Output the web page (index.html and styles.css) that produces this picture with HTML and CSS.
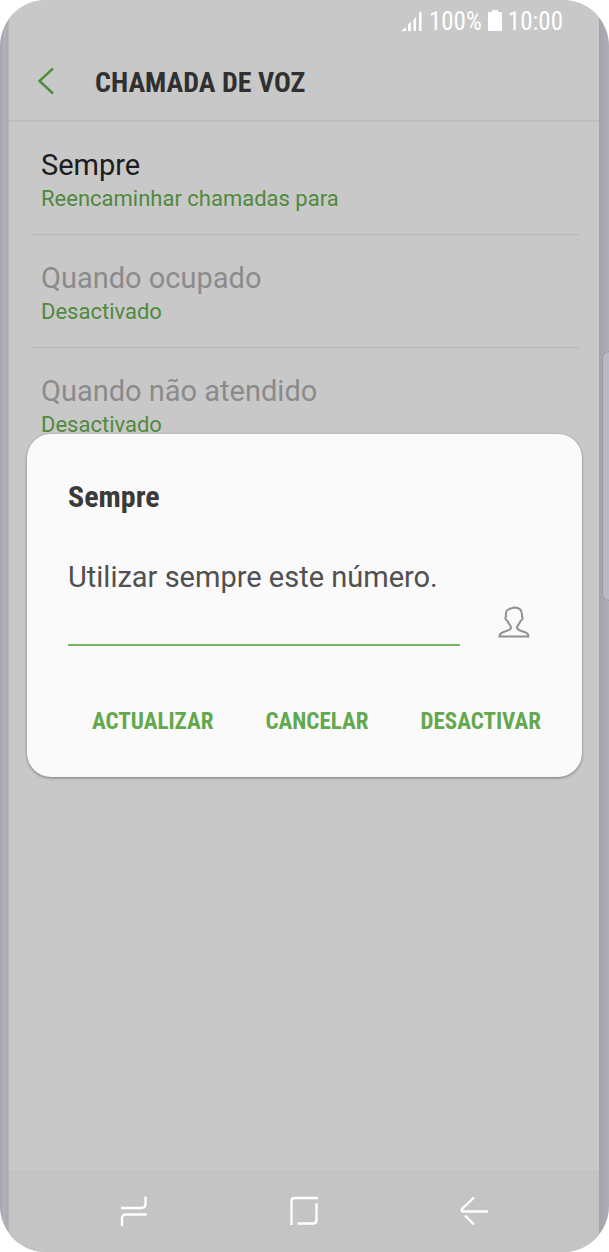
FILE: index.html
```html
<!DOCTYPE html>
<html lang="pt">
<head><meta charset="utf-8"/>
<meta name="viewport" content="width=device-width, initial-scale=1"/>
<title>Chamada de voz</title>
<link rel="stylesheet" href="styles.css">
</head>
<body>
<div class="phone">
<div class="sidekey"></div>
<div class="screen">
    <div class="statusbar">
        <svg class="signal" width="22" height="22" viewBox="0 0 22 22">
            <path d="M0 21L5 17V21ZM7 14.500L10 12V21H7ZM12.500 9.500L15 7V21H12.500ZM18 3L20.500 1V21H18Z" fill="currentColor"/>
        </svg>
        <span>100%</span>
        <svg class="battery" width="14" height="22" viewBox="0 0 14 22">
            <path d="M4 0H10V2H13Q14 2 14 3V20Q14 21 13 21H1Q0 21 0 20V3Q0 2 1 2H4Z" fill="currentColor"/>
        </svg>
        <span>10:00</span>
    </div>

    <header class="titlebar">
        <button class="back" aria-label="Voltar">
            <svg width="18" height="28" viewBox="0 0 18 28"><path d="M16 1.500L2.500 14L16 26.500" fill="none" stroke="currentColor" stroke-width="2.500"/></svg>
        </button>
        <h1>CHAMADA DE VOZ</h1>
    </header>

    <ul class="settings">
        <li><span class="name">Sempre</span><span class="value">Reencaminhar chamadas para</span></li>
        <li class="disabled"><span class="name">Quando ocupado</span><span class="value">Desactivado</span></li>
        <li class="disabled"><span class="name">Quando não atendido</span><span class="value">Desactivado</span></li>
    </ul>

    <nav class="navbar">
        <button aria-label="Recentes">
            <svg width="28" height="32" viewBox="0 0 28 32"><path d="M1 13H21Q25.500 13 25.500 9V1.500M26.500 19.500H6Q2 19.500 2 23.500V31"/></svg>
        </button>
        <button aria-label="Início">
            <svg width="28" height="32" viewBox="0 0 28 32"><path d="M1.500 30V6Q1.500 3 4.500 3H28M26.500 8.500V25Q26.500 28.500 23 28.500H7.500"/></svg>
        </button>
        <button aria-label="Retroceder">
            <svg width="28" height="32" viewBox="0 0 28 32"><path d="M14 2.500L2 14Q1 16.500 3 16.500H28M5 20.500L14 29.500"/></svg>
        </button>
    </nav>
</div>

<!-- dialog floats over the list -->
<form class="dialog" role="dialog" aria-labelledby="dialogTitle">
    <h2 id="dialogTitle">Sempre</h2>
    <label for="number">Utilizar sempre este número.</label>
    <div class="numberrow">
        <input id="number" type="tel">
        <button type="button" class="contact" aria-label="Contactos">
            <svg width="32" height="32" viewBox="0 0 32 32"><path d="M1.500 30.500C1.500 27.500 3 26.500 7 25.500C11 24.500 13 23.500 13 21.500C13 19 10.500 18.500 9.500 15C7 13.500 7 11.500 8 10.500C7 4 10 3 13 2.500L16 1.500C21.500 1.500 24.500 4 24 10.500C25 11.500 25 13.500 22.500 15C21.500 18.500 19 19 19 21.500C19 23.500 21 24.500 25 25.500C29 26.500 30.500 27.500 30.500 30.500Z" fill="none" stroke="currentColor" stroke-width="2"/></svg>
        </button>
    </div>
    <div class="actions">
        <button type="button">ACTUALIZAR</button>
        <button type="button">CANCELAR</button>
        <button type="button">DESACTIVAR</button>
    </div>
</form>
</div>
</body>
</html>
```
FILE: styles.css
```css
* { box-sizing: border-box; }

body {
    margin: 0px;
    background: #fff;
    font-family: Roboto, "Liberation Sans", sans-serif;
}

button {
    padding: 0;
    border: 0;
    background: none;
    cursor: pointer;
}

svg { display: block; }

.phone {
    position: relative;
    display: flex;
    min-height: 100vh;
    padding: 0 10px 0 9px;
    overflow: hidden;
    border-radius: 46px;
    background: linear-gradient(to right, #a5a6ad 0, #b3b4bb 5px, #a9aab0 7px, #b9b9bb 9px, #c8c8c8 10px, #c8c8c8 calc(100% - 12px), #a3a4aa calc(100% - 10px), #a6a7af calc(100% - 6px), #adaeb7 100%);
}

/* hardware key on the right edge */
.sidekey {
    position: absolute;
    top: 351px;
    right: -8px;
    width: 15px;
    height: 250px;
    border: 1px solid #9899a1;
    border-radius: 8px;
    background: #b9bac5;
}

.screen {
    flex: 1;
    display: flex;
    flex-direction: column;
    background: #c8c8c8;
}

.statusbar {
    display: flex;
    justify-content: flex-end;
    align-items: center;
    gap: 6px;
    height: 42px;
    padding-right: 36px;
    color: #fff;
    font: 25px "Roboto Condensed", Roboto, sans-serif;
}

.titlebar {
    display: flex;
    align-items: center;
    height: 80px;
    padding-left: 28px;
    border-bottom: 2px solid #bdbdbd;
}
.back {
    width: 58px;
    color: #4f8f3e;
}

h1, h2 {
    margin: 0;
    font: bold 28px/36px "Roboto Condensed", Roboto, sans-serif;
}
h1 {
    padding-top: 3px;
    color: #303030;
}
h2 {
    color: #3a3a3a;
    font-size: 30px;
}

.settings {
    flex: 1;
    margin: 0;
    padding: 0 20px 0 22px;
    list-style: none;
}
.settings li {
    display: flex;
    flex-direction: column;
    padding: 24px 10px 20px;
    border-bottom: 1px solid #b8b8b8;
}
.name {
    color: #1c1c1c;
    font-size: 29px;
    line-height: 38px;
}
.value {
    color: #50893f;
    font-size: 22px;
    line-height: 30px;
}
.disabled .name { color: #8b8b8b; }

.navbar {
    display: grid;
    grid-template-columns: repeat(3, 1fr);
    height: 82px;
    padding: 0 40px;
    background: #c4c4c4;
}
.navbar button {
    display: flex;
    justify-content: center;
    align-items: center;
}
.navbar path {
    fill: none;
    stroke: #fff;
    stroke-width: 2.4;
}

.dialog {
    position: absolute;
    top: 434px;
    left: 27px;
    right: 27px;
    padding: 45px 41px 30px;
    border-radius: 24px;
    background: #fafafa;
    box-shadow: 0 1px 3px rgba(0, 0, 0, 0.4);
}
.dialog label {
    display: block;
    margin-top: 43px;
    color: #505050;
    font-size: 29px;
    line-height: 38px;
}
.numberrow {
    display: flex;
    gap: 38px;
    height: 50px;
    padding-right: 11px;
}
.numberrow input {
    flex: 1;
    min-width: 0;
    padding: 0;
    border: 0;
    border-bottom: 2px solid #77b866;
    outline: 0;
    background: none;
    font: 29px Roboto, sans-serif;
}
.contact {
    align-self: flex-start;
    margin-top: 10px;
    color: #909090;
}
.actions {
    display: flex;
    justify-content: flex-end;
    gap: 52px;
    margin-top: 51px;
}
.actions button {
    color: #63a84f;
    font: bold 23px/50px "Roboto Condensed", Roboto, sans-serif;
}
```
